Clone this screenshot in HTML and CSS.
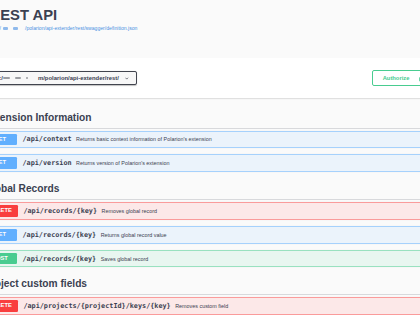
FILE: index.html
```html
<!DOCTYPE html>
<html lang="en">
<head>
    <meta charset="UTF-8">
    <meta name="viewport" content="width=device-width, initial-scale=1.0">
    <title>REST API - Swagger UI</title>
    <link rel="stylesheet" href="styles.css">
</head>
<body>
    <div class="wrapper info">
        <h2 class="title">REST API</h2>
        <a class="info-link" href="#">https:/<span class="blob link-blob b1"></span><span class="blob link-blob b2"></span>/polarion/api-extender/rest/swagger/definition.json</a>
    </div>

    <div class="scheme-container">
        <div class="wrapper schemes">
            <div class="servers">
                <span>https:/</span><span class="blob b3"></span><span class="blob b4"></span><span class="blob b5"></span><span>m/polarion/api-extender/rest/</span>
                <svg class="chevron" viewBox="0 0 4 3" width="3.5" height="3"><path d="M0.5 0.6 L2 2.2 L3.5 0.6" fill="none" stroke="#41444e" stroke-width="0.8"/></svg>
            </div>
            <button class="btn-authorize" type="button">
                <span>Authorize</span>
                <svg class="lock" viewBox="0 0 20 20" width="8" height="8"><path fill="#49cc90" d="M15.8 8H14V5.6C14 2.703 12.665 1 10 1 7.334 1 6 2.703 6 5.6V6h2v-.801C8 3.754 8.797 3 10 3c1.203 0 2 .754 2 2.199V8H4c-.553 0-1 .646-1 1.199V17c0 .549.428 1.139.951 1.307l1.197.387C5.672 18.861 6.6 19 7.150 19h5.698c.55 0 1.477-.139 1.999-.307l1.196-.387c.524-.167.957-.757.957-1.306V9.199C17 8.646 16.352 8 15.8 8z"/></svg>
            </button>
        </div>
    </div>

    <div class="wrapper">
        <div class="tag-section">
            <h3 class="tag">Extension Information</h3>
            <div class="opblock get">
                <span class="method">GET</span>
                <span class="path">/api/context</span>
                <span class="desc">Returns basic context information of Polarion's extension</span>
            </div>
            <div class="opblock get">
                <span class="method">GET</span>
                <span class="path">/api/version</span>
                <span class="desc">Returns version of Polarion's extension</span>
            </div>
        </div>

        <div class="tag-section">
            <h3 class="tag">Global Records</h3>
            <div class="opblock delete">
                <span class="method">DELETE</span>
                <span class="path">/api/records/{key}</span>
                <span class="desc">Removes global record</span>
            </div>
            <div class="opblock get">
                <span class="method">GET</span>
                <span class="path">/api/records/{key}</span>
                <span class="desc">Returns global record value</span>
            </div>
            <div class="opblock post">
                <span class="method">POST</span>
                <span class="path">/api/records/{key}</span>
                <span class="desc">Saves global record</span>
            </div>
        </div>

        <div class="tag-section">
            <h3 class="tag">Project custom fields</h3>
            <div class="opblock delete">
                <span class="method">DELETE</span>
                <span class="path">/api/projects/{projectId}/keys/{key}</span>
                <span class="desc">Removes custom field</span>
            </div>
            <div class="opblock get">
                <span class="method">GET</span>
                <span class="path">/api/projects/{projectId}/keys/{key}</span>
                <span class="desc">Returns custom field value</span>
            </div>
        </div>
    </div>
</body>
</html>
```

FILE: styles.css
```css
html, body {
    margin: 0;
    height: 100%;
    overflow: hidden;
}
body {
    background-color: #fafafa;
    font-family: "Liberation Sans", Arial, sans-serif;
    color: #3b4151;
}
.wrapper {
    width: 457px;
    margin-left: -20px;
}
.info {
    height: 58px;
    padding-top: 5.5px;
    box-sizing: border-box;
}
.title {
    margin: 0;
    padding-left: 9.5px;
    font-size: 14.8px;
    line-height: 18px;
    font-weight: bold;
}
.info-link {
    display: block;
    margin-top: 1.5px;
    padding-left: 7px;
    font-size: 5.1px;
    line-height: 6px;
    color: #4990e2;
    text-decoration: none;
}
.blob {
    display: inline-block;
    height: 2.5px;
    vertical-align: middle;
    border-radius: 1px;
    background-color: rgba(65, 68, 78, 0.5);
}
.link-blob {
    background-color: rgba(73, 144, 226, 0.6);
}
.b1 { width: 5px; margin: 0 4.3px 0 2.5px; }
.b2 { width: 5.5px; margin-right: 6.8px; }
.b3 { width: 7px; margin-right: 5px; }
.b4 { width: 6px; margin-right: 5px; }
.b5 { width: 2px; margin-right: 10px; }

.scheme-container {
    background-color: #fff;
    box-shadow: 0 1px 1px rgba(0, 0, 0, 0.1);
    margin-bottom: 8.5px;
}
.schemes {
    display: flex;
    justify-content: space-between;
    align-items: center;
    padding: 12px 0;
}
.servers {
    display: flex;
    align-items: center;
    height: 14px;
    padding: 0 7.5px 0 4px;
    border: 1px solid #41444e;
    border-radius: 2px;
    background-color: #f7f7f7;
    box-shadow: 0 0.5px 1px rgba(0, 0, 0, 0.25);
    box-sizing: border-box;
    font-size: 5.9px;
    font-weight: bold;
    white-space: nowrap;
}
.chevron {
    margin-left: 6.5px;
}
.btn-authorize {
    display: flex;
    align-items: center;
    height: 16px;
    padding: 0 9.6px;
    border: 1px solid #49cc90;
    border-radius: 2px;
    background: transparent;
    color: #49cc90;
    font-family: "Liberation Sans", Arial, sans-serif;
    font-size: 5.8px;
    font-weight: bold;
    box-sizing: border-box;
}
.lock {
    margin-left: 9px;
}

.tag {
    display: flex;
    align-items: center;
    height: 21px;
    margin: 0 0 2px;
    padding: 0 8px 0 4px;
    border-bottom: 1px solid rgba(59, 65, 81, 0.18);
    font-size: 10.2px;
    font-weight: bold;
}
.opblock {
    display: flex;
    align-items: center;
    padding: 2px;
    margin-bottom: 6px;
    border: 1px solid;
    border-radius: 2px;
    box-shadow: 0 0 1px rgba(0, 0, 0, 0.12);
    white-space: nowrap;
}
.method {
    min-width: 34px;
    height: 11.8px;
    line-height: 11.8px;
    padding: 0 6px;
    margin-right: 5.5px;
    box-sizing: border-box;
    border-radius: 1.3px;
    color: #fff;
    font-size: 5.8px;
    font-weight: bold;
    text-align: center;
    text-shadow: 0 0.4px 0 rgba(0, 0, 0, 0.1);
}
.path {
    padding-right: 4.5px;
    font-family: "DejaVu Sans Mono", "Liberation Mono", monospace;
    font-size: 6.8px;
    font-weight: bold;
}
.desc {
    font-size: 5.4px;
}

.get {
    background-color: #ebf3fb;
    border-color: rgba(97, 175, 254, 0.5);
}
.get .method {
    background-color: #61affe;
}
.delete {
    background-color: #fce8e8;
    border-color: rgba(249, 62, 62, 0.45);
}
.delete .method {
    background-color: #f93e3e;
}
.post {
    background-color: #e8f6f0;
    border-color: rgba(73, 204, 144, 0.5);
}
.post .method {
    background-color: #49cc90;
}
```
